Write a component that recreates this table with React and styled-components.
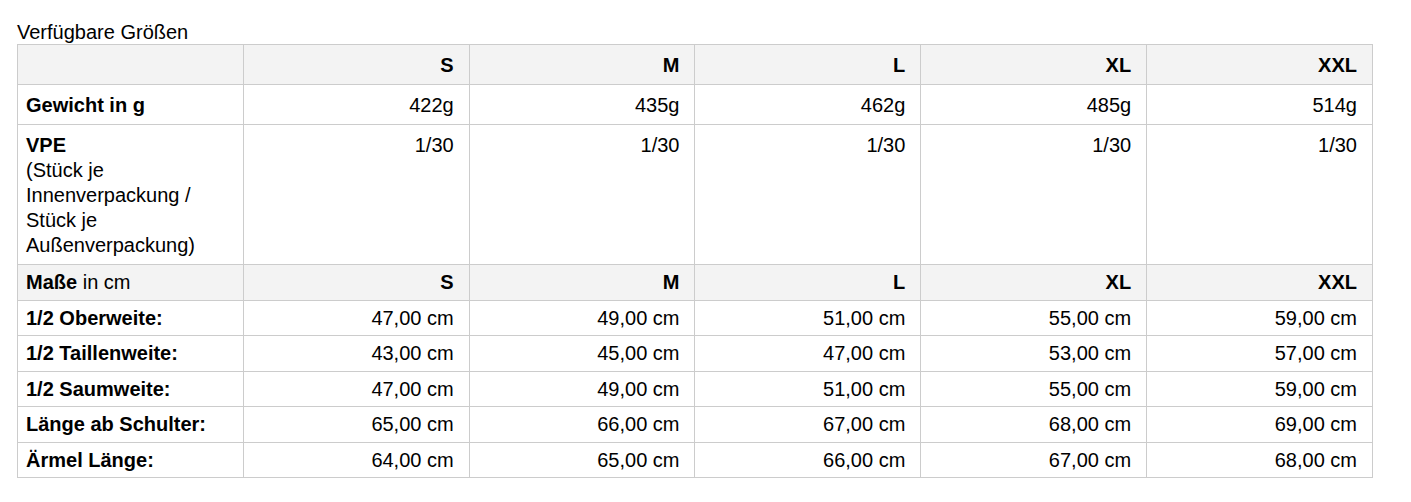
import styled, { createGlobalStyle } from 'styled-components';

const GlobalStyle = createGlobalStyle`
  body {
    margin: 0;
    background: #fff;
    font-family: "Liberation Sans", Arial, sans-serif;
    color: #000;
  }
`;

const Wrapper = styled.div`
  padding: 21px 17px;
`;

const Title = styled.div`
  font-size: 20px;
  line-height: 23px;
`;

const SizeTable = styled.table`
  width: 1356px;
  table-layout: fixed;
  border-collapse: collapse;
  font-size: 20px;
  line-height: 25px;
`;

const Row = styled.tr`
  background: ${(p) => (p.$head ? '#f3f3f3' : '#fff')};
`;

const Cell = styled.td`
  border: 1px solid #cccccc;
  vertical-align: top;
  text-align: ${(p) => (p.$label ? 'left' : 'right')};
  font-weight: ${(p) => (p.$bold ? 'bold' : 'normal')};
  padding: ${(p) => (p.$compact ? '5px 15px 4.5px 8px' : '7.5px 15px 6.5px 8px')};
`;

const sizes = ['S', 'M', 'L', 'XL', 'XXL'];

const weights = ['422g', '435g', '462g', '485g', '514g'];

const measures = [
  ['1/2 Oberweite:', ['47,00', '49,00', '51,00', '55,00', '59,00']],
  ['1/2 Taillenweite:', ['43,00', '45,00', '47,00', '53,00', '57,00']],
  ['1/2 Saumweite:', ['47,00', '49,00', '51,00', '55,00', '59,00']],
  ['Länge ab Schulter:', ['65,00', '66,00', '67,00', '68,00', '69,00']],
  ['Ärmel Länge:', ['64,00', '65,00', '66,00', '67,00', '68,00']],
];

function App() {
  return (
    <Wrapper>
      <GlobalStyle />
      <Title>Verfügbare Größen</Title>
      <SizeTable>
        <tbody>
          <Row $head>
            <Cell $label />
            {sizes.map((s) => (
              <Cell key={s} $bold>{s}</Cell>
            ))}
          </Row>
          <Row>
            <Cell $label $bold>Gewicht in g</Cell>
            {weights.map((w) => (
              <Cell key={w}>{w}</Cell>
            ))}
          </Row>
          <Row>
            <Cell $label>
              <b>VPE</b>
              <br />
              (Stück je
              <br />
              Innenverpackung /
              <br />
              Stück je
              <br />
              Außenverpackung)
            </Cell>
            {sizes.map((s) => (
              <Cell key={s}>1/30</Cell>
            ))}
          </Row>
          <Row $head>
            <Cell $label $compact>
              <b>Maße</b> in cm
            </Cell>
            {sizes.map((s) => (
              <Cell key={s} $bold $compact>{s}</Cell>
            ))}
          </Row>
          {measures.map(([label, values]) => (
            <Row key={label}>
              <Cell $label $bold $compact>{label}</Cell>
              {values.map((v, i) => (
                <Cell key={i} $compact>{v} cm</Cell>
              ))}
            </Row>
          ))}
        </tbody>
      </SizeTable>
    </Wrapper>
  );
}

export default App;
